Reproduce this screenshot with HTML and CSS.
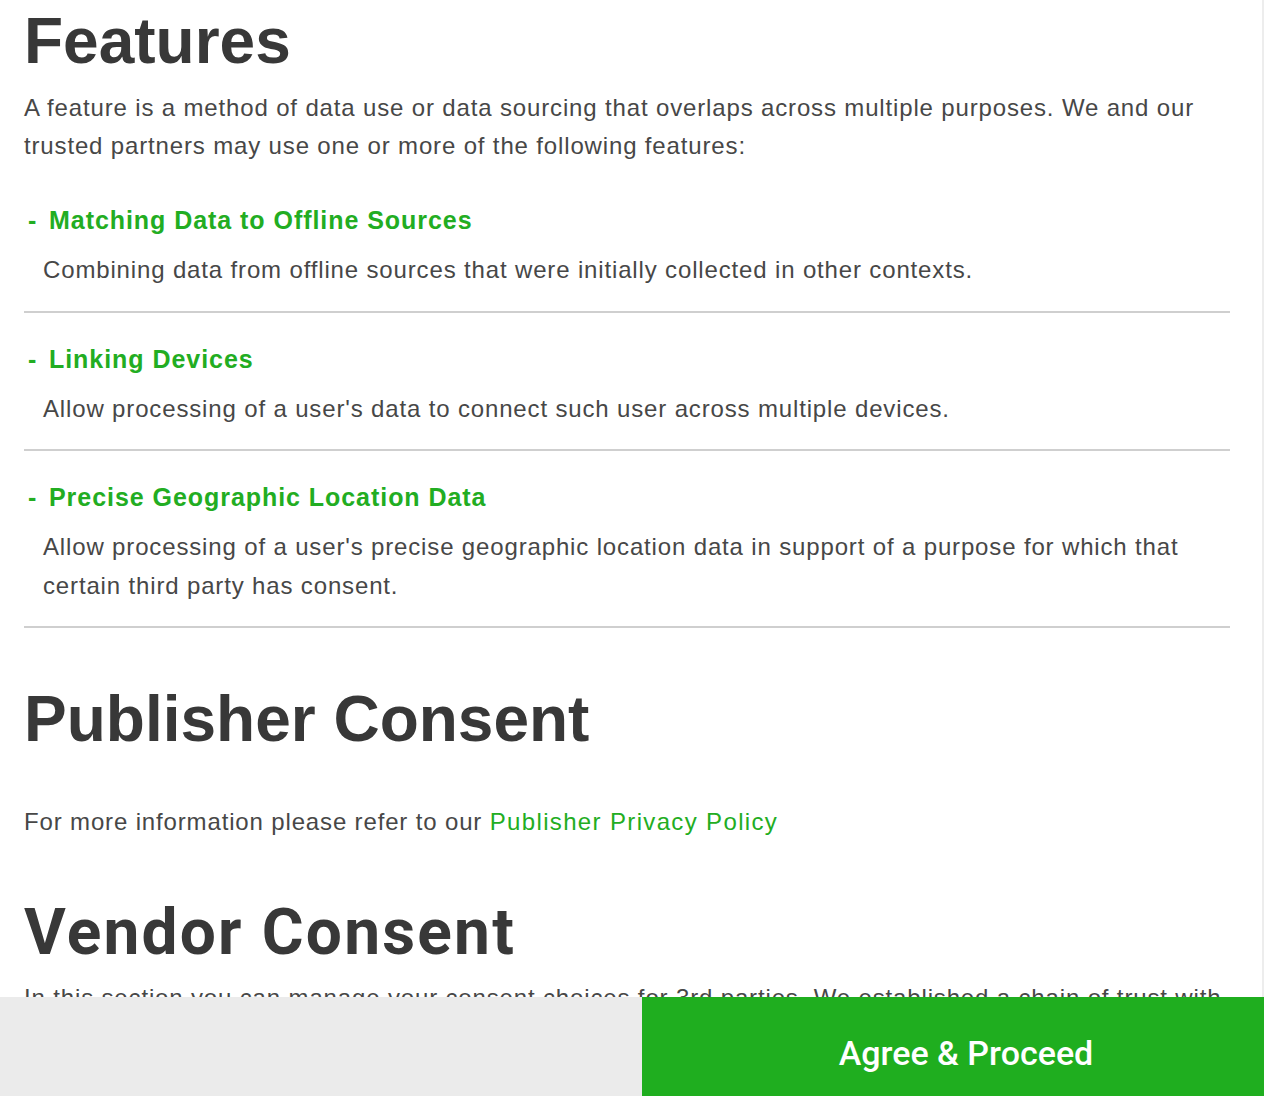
FILE: index.html
```html
<!DOCTYPE html>
<html lang="en">
<head>
    <meta charset="UTF-8">
    <meta name="viewport" content="width=device-width, initial-scale=1.0">
    <title>Privacy Settings</title>
    <link rel="stylesheet" href="styles.css">
</head>
<body>
    <main class="consent-body">
        <section class="consent-section">
            <h1>Features</h1>
            <p class="section-intro lead">A feature is a method of data use or data sourcing that overlaps across multiple purposes. We and our trusted partners may use one or more of the following features:</p>
            <div class="feature">
                <h3 class="feature-title"><span class="toggle">-</span>Matching Data to Offline Sources</h3>
                <p class="feature-desc">Combining data from offline sources that were initially collected in other contexts.</p>
            </div>
            <div class="feature">
                <h3 class="feature-title"><span class="toggle">-</span>Linking Devices</h3>
                <p class="feature-desc">Allow processing of a user's data to connect such user across multiple devices.</p>
            </div>
            <div class="feature">
                <h3 class="feature-title"><span class="toggle">-</span>Precise Geographic Location Data</h3>
                <p class="feature-desc">Allow processing of a user's precise geographic location data in support of a purpose for which that certain third party has consent.</p>
            </div>
        </section>
        <section class="consent-section">
            <h1>Publisher Consent</h1>
            <p class="section-intro spaced">For more information please refer to our <a href="#" class="policy-link">Publisher Privacy Policy</a></p>
        </section>
        <section class="consent-section">
            <h1 class="vendor-title">Vendor Consent</h1>
            <p class="section-intro vendor-intro">In this section you can manage your consent choices for 3rd parties. We established a chain of trust with our partners and vendors to make sure your data is handled with care.</p>
        </section>
    </main>
    <footer class="consent-actions">
        <div class="actions-left"></div>
        <button class="agree-btn">Agree &amp; Proceed</button>
    </footer>
</body>
</html>
```

FILE: styles.css
```css
html, body {
    height: 100%;
}
body {
    font-family: 'Liberation Sans', Arial, sans-serif;
    margin: 0;
    padding: 0;
    background: #fff;
    color: #474747;
    display: flex;
    flex-direction: column;
    overflow: hidden;
}
.consent-body {
    flex: 1;
    overflow: hidden;
    padding: 5px 32px 0 24px;
    border-right: 2px solid #ededed;
}
.consent-section h1 {
    font-size: 64px;
    line-height: 1.15;
    color: #383838;
    margin: 0;
}
.section-intro {
    font-size: 24px;
    line-height: 1.6;
    letter-spacing: 0.85px;
    margin: 10px 0 0;
}
.section-intro.lead {
    margin-bottom: 9px;
}
.section-intro.spaced {
    margin-top: 46px;
}
.section-intro.vendor-intro {
    margin-top: 9px;
}
.feature {
    border-bottom: 2px solid #cfcfcf;
    padding: 26px 0 21px;
}
.feature-title {
    font-size: 25px;
    letter-spacing: 0.95px;
    color: #22ad22;
    margin: 0;
    line-height: 40px;
    display: flex;
    align-items: center;
}
.toggle {
    width: 21px;
    padding-left: 4px;
    letter-spacing: 0;
}
.feature-desc {
    font-size: 24px;
    line-height: 1.6;
    letter-spacing: 0.85px;
    margin: 11px 0 0;
    padding-left: 19px;
}
.consent-section + .consent-section {
    margin-top: 55px;
}
.vendor-title {
    font-family: Roboto, sans-serif;
    letter-spacing: 2.2px;
}
.policy-link {
    color: #22ad22;
    text-decoration: none;
    letter-spacing: 1.35px;
}
.consent-actions {
    display: flex;
    height: 99px;
    flex-shrink: 0;
}
.actions-left {
    flex: 0 0 642px;
    background: #ebebeb;
}
.agree-btn {
    flex: 1;
    background: #1fae1f;
    color: white;
    border: none;
    padding: 12px 0 0 26px;
    font-family: Roboto, sans-serif;
    font-weight: 500;
    font-size: 34px;
    cursor: pointer;
}
```
